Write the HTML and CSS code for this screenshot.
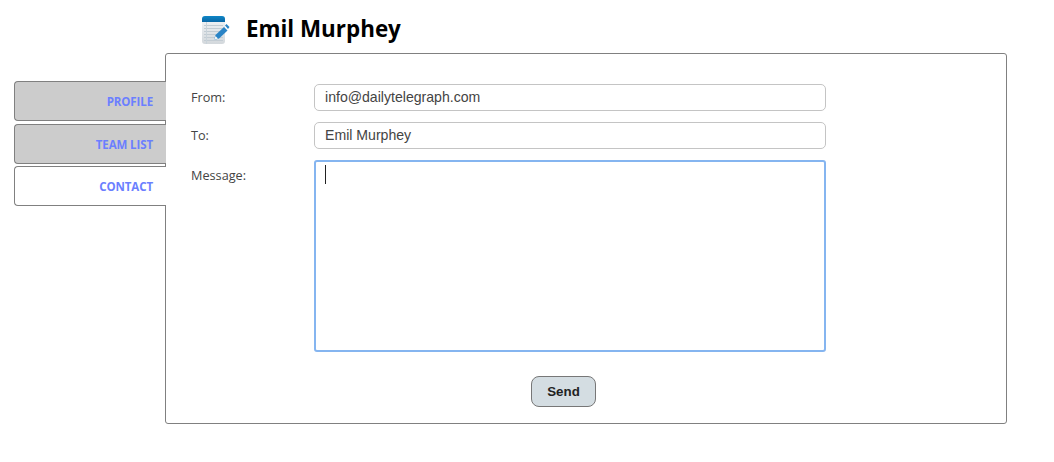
FILE: index.html
```html
<!DOCTYPE html>
<html lang="en">
<head>
<meta charset="utf-8">
<title>Emil Murphey</title>
<link rel="stylesheet" href="styles.css">
</head>
<body>
<header class="head">
  <svg class="head-icon" width="30" height="30" viewBox="0 0 30 30" aria-hidden="true">
    <defs>
      <linearGradient id="pg" x1="0" y1="0" x2="0" y2="1"><stop offset="0" stop-color="#f4f6f8"/><stop offset="1" stop-color="#d3d8dc"/></linearGradient>
      <linearGradient id="tp" x1="0" y1="0" x2="0" y2="1"><stop offset="0" stop-color="#0f86c6"/><stop offset="1" stop-color="#0a67a6"/></linearGradient>
    </defs>
    <rect x="2" y="1" width="23" height="28" rx="3" fill="url(#pg)"/>
    <path d="M2 7V4a3 3 0 0 1 3-3h17a3 3 0 0 1 3 3v3z" fill="url(#tp)"/>
    <path d="M4 10.500h19M4 13.500h19M4 16.500h19M4 19.500h19M4 22.500h19M4 25.500h19" stroke="#c3ccd3" stroke-width="1"/>
    <path d="M6.500 7v22" stroke="#c9d3da" stroke-width="1"/>
    <path d="M14 25l1.500-5 8.500-8 3.500 3.500-8.500 8z" fill="#2a84c6"/>
    <path d="M25 10.500l1.500-1.500 3 3-1.500 2z" fill="#2a84c6"/>
    <path d="M14 25l1.500-4 2.500 2.500z" fill="#f3f5f6"/>
  </svg>
  <h1 class="title">Emil Murphey</h1>
</header>
<div class="layout">
  <nav class="tabs">
    <a class="tab" href="#">PROFILE</a>
    <a class="tab" href="#">TEAM LIST</a>
    <a class="tab tab-active" href="#">CONTACT</a>
  </nav>
  <main class="panel">
    <form class="form">
      <label class="label" for="from">From:</label>
      <input class="field" id="from" type="text" value="info@dailytelegraph.com">
      <label class="label label-to" for="to">To:</label>
      <input class="field" id="to" type="text" value="Emil Murphey">
      <label class="label label-msg" for="msg">Message:</label>
      <div class="area" id="msg"><span class="caret"></span></div>
      <div class="actions"><button class="send" type="button">Send</button></div>
    </form>
  </main>
</div>
</body>
</html>
```
FILE: styles.css
```css
html, body {
  margin: 0;
  padding: 0;
  background: #fff;
}
body {
  width: 1054px;
  height: 462px;
  overflow: hidden;
  font-family: "Open Sans", "Noto Sans", sans-serif;
}
.head {
  display: flex;
  align-items: center;
  height: 53px;
  padding-left: 200px;
  box-sizing: border-box;
  padding-top: 6px;
}
.head-icon {
  flex: none;
  margin: 1px 16px 0 0;
}
.title {
  margin: -2px 0 0;
  font-size: 22.400px;
  line-height: 32px;
  font-weight: 700;
  color: #000;
  font-family: "Open Sans", sans-serif;
}
.layout {
  display: flex;
  align-items: flex-start;
  padding-left: 14px;
}
.tabs {
  width: 151px;
  flex: none;
  padding-top: 28px;
  position: relative;
  z-index: 1;
}
.tab {
  display: block;
  box-sizing: border-box;
  width: 152px;
  height: 40px;
  margin-bottom: 3px;
  padding-right: 13px;
  border: 1px solid #808080;
  border-right: 0;
  border-radius: 4px 0 0 4px;
  background: #ccc;
  color: #6b7fff;
  font-size: 11.500px;
  font-weight: 700;
  letter-spacing: -0.1px;
  line-height: 40px;
  text-align: right;
  text-decoration: none;
}
.tab:nth-child(2) { margin-bottom: 2px; }
.tab-active {
  background: #fff;
  margin-bottom: 0;
}
.panel {
  box-sizing: border-box;
  width: 842px;
  height: 371px;
  border: 1px solid #808080;
  border-radius: 3px;
  background: #fff;
  padding: 30px 0 0 25px;
}
.form {
  display: grid;
  grid-template-columns: 123px 512px;
  row-gap: 11px;
}
.label {
  font-size: 12.700px;
  line-height: 18px;
  color: #444;
  padding-top: 4px;
}
.label-msg { padding-top: 6px; }
.field {
  box-sizing: border-box;
  width: 512px;
  height: 27px;
  padding: 0 10px 2px;
  border: 1px solid #c4c4c4;
  border-radius: 5px;
  font: 14.100px "Liberation Sans", Arial, sans-serif;
  color: #444;
  outline: 0;
}
.area {
  box-sizing: border-box;
  width: 512px;
  height: 192px;
  padding: 3px 9px;
  border: 2px solid #85b5f0;
  border-radius: 3px;
}
.caret {
  display: block;
  width: 1px;
  height: 19px;
  background: #222;
}
.actions {
  grid-column: 1 / -1;
  display: flex;
  padding: 13px 0 0 340px;
}
.send {
  box-sizing: border-box;
  width: 65px;
  height: 31px;
  border: 1px solid #777;
  border-radius: 8px;
  background: #d4dde2;
  color: #222;
  font: 700 13.333px "Liberation Sans", sans-serif;
  padding: 0;
}
```
